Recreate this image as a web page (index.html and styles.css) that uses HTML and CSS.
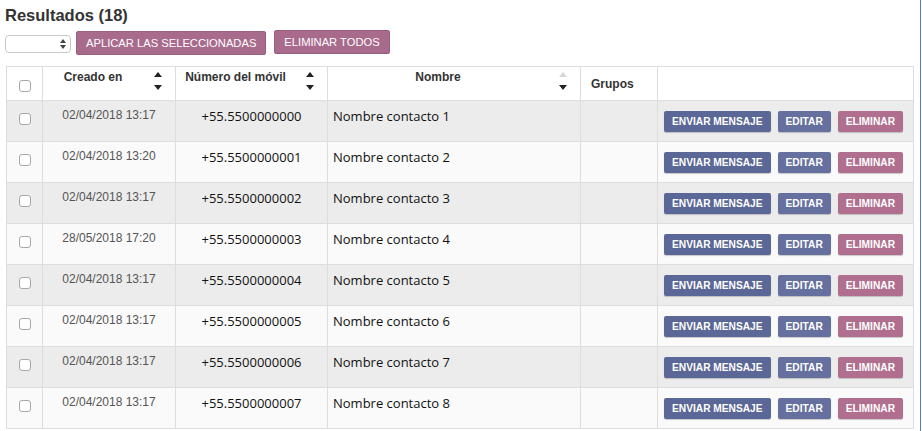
FILE: index.html
```html
<!DOCTYPE html>
<html lang="es">
<head>
  <meta charset="UTF-8" />
  <title>Resultados</title>
  <link rel="stylesheet" href="styles.css">
</head>
<body>
  <div class="page">
    <h2 class="title">Resultados (18)</h2>

    <div class="toolbar">
      <div class="select-box">
        <svg class="select-arrows" width="6" height="10" viewBox="0 0 6 10"><path d="M3 0L6 4H0Z M3 10L0 6H6Z" fill="#444"/></svg>
      </div>
      <button class="btn-top">Aplicar las seleccionadas</button>
      <button class="btn-top">Eliminar todos</button>
    </div>

    <table class="results">
      <thead>
        <tr>
          <th class="col-check"><span class="checkbox"></span></th>
          <th class="col-date">
            <div class="sortable">
              <span class="label">Creado en</span>
              <span class="sort"><i class="up"></i><i class="down"></i></span>
            </div>
          </th>
          <th class="col-phone">
            <div class="sortable">
              <span class="label">Número del móvil</span>
              <span class="sort"><i class="up"></i><i class="down"></i></span>
            </div>
          </th>
          <th class="col-name">
            <div class="sortable">
              <span class="label">Nombre</span>
              <span class="sort"><i class="up off"></i><i class="down"></i></span>
            </div>
          </th>
          <th class="col-groups"><span class="plain">Grupos</span></th>
          <th class="col-actions"></th>
        </tr>
      </thead>
      <tbody id="rows"></tbody>
    </table>
  </div>

  <script>
    const contacts = [
      ["02/04/2018 13:17", "+55.5500000000", "Nombre contacto 1"],
      ["02/04/2018 13:20", "+55.5500000001", "Nombre contacto 2"],
      ["02/04/2018 13:17", "+55.5500000002", "Nombre contacto 3"],
      ["28/05/2018 17:20", "+55.5500000003", "Nombre contacto 4"],
      ["02/04/2018 13:17", "+55.5500000004", "Nombre contacto 5"],
      ["02/04/2018 13:17", "+55.5500000005", "Nombre contacto 6"],
      ["02/04/2018 13:17", "+55.5500000006", "Nombre contacto 7"],
      ["02/04/2018 13:17", "+55.5500000007", "Nombre contacto 8"]
    ];

    const tbody = document.getElementById("rows");
    contacts.forEach(c => {
      const tr = document.createElement("tr");
      tr.innerHTML = `
        <td class="col-check"><span class="checkbox"></span></td>
        <td class="date">${c[0]}</td>
        <td class="phone">${c[1]}</td>
        <td class="name">${c[2]}</td>
        <td></td>
        <td class="actions">
          <div class="btn-group">
            <button class="btn btn-send">Enviar mensaje</button>
            <button class="btn btn-edit">Editar</button>
            <button class="btn btn-delete">Eliminar</button>
          </div>
        </td>`;
      tbody.appendChild(tr);
    });
  </script>
</body>
</html>
```

FILE: styles.css
```css
body {
  margin: 0;
  font-family: "Liberation Sans", Arial, sans-serif;
  background: #fff;
  color: #333;
}

.page {
  width: 915px;
  height: 431px;
  padding-left: 5px;
  border-right: 1px solid #4a7cc0;
  overflow: hidden;
}

.title {
  font-size: 16.5px;
  font-weight: bold;
  margin: 0;
  padding-top: 5px;
  line-height: 20px;
  color: #333;
}

.toolbar {
  display: flex;
  align-items: center;
  gap: 5px;
  margin-top: 5px;
  height: 25px;
}

.select-box {
  width: 64px;
  height: 16px;
  border: 1px solid #c8c8c8;
  border-radius: 4px;
  position: relative;
  margin-top: 3px;
}

.select-arrows {
  position: absolute;
  right: 4px;
  top: 3px;
}

.btn-top {
  font-family: "Liberation Sans", Arial, sans-serif;
  font-size: 11.2px;
  text-transform: uppercase;
  color: #fff;
  background: #a96b8c;
  border: 1px solid #9a5f7e;
  border-radius: 2px;
  height: 24px;
  padding: 0 9px;
  cursor: pointer;
}

.btn-top + .btn-top {
  margin-left: 3px;
  margin-top: -2px;
}

.results {
  margin-top: 11px;
  margin-left: 1px;
  width: 908px;
  border-collapse: collapse;
  border: 1px solid #ddd;
  table-layout: fixed;
}

.results th,
.results td {
  border: 1px solid #ddd;
  padding: 0;
}

.results thead tr {
  height: 34px;
}

.results th {
  font-size: 12px;
  font-weight: bold;
  color: #333;
  background: #fff;
  vertical-align: top;
}

.col-check { width: 35px; }
.col-date { width: 132px; }
.col-phone { width: 151px; }
.col-name { width: 252px; }
.col-groups { width: 76px; }

.results th.col-groups {
  text-align: left;
}

.plain {
  display: block;
  margin: 10px 0 0 10px;
  line-height: 14px;
}

.results th.col-check {
  vertical-align: top;
}

.results th.col-check .checkbox {
  margin-top: 13px;
}

.sortable {
  display: flex;
  padding-top: 3px;
}

.sortable .label {
  flex: 1;
  text-align: center;
  line-height: 14px;
}

.sort {
  width: 30px;
  display: flex;
  flex-direction: column;
  align-items: center;
  gap: 8px;
  padding-top: 2px;
  margin-right: 2px;
}

.sort i {
  display: block;
  width: 0;
  height: 0;
  border-left: 4px solid transparent;
  border-right: 4px solid transparent;
}

.sort .up { border-bottom: 5px solid #222; }
.sort .up.off { border-bottom-color: #d8d8d8; }
.sort .down { border-top: 5px solid #222; }

.checkbox {
  display: block;
  width: 10px;
  height: 10px;
  margin: 0 auto;
  border: 1px solid #a8a8a8;
  border-radius: 3px;
  background: #fff;
}

.results tbody tr {
  height: 41px;
}

.results tbody tr:nth-child(odd) { background: #ececec; }
.results tbody tr:nth-child(even) { background: #fafafa; }

.results td {
  vertical-align: top;
  padding-top: 8px;
  line-height: 14px;
}

.results td.col-check {
  padding-top: 12px;
}

.results td.date {
  text-align: center;
  font-size: 12px;
  color: #555;
  padding-top: 7px;
}

.phone {
  text-align: center;
  font-family: "Open Sans", sans-serif;
  font-size: 13px;
  color: #111;
  padding-right: 4px;
}

.name {
  font-family: "Open Sans", sans-serif;
  font-size: 13px;
  color: #111;
  padding-left: 5px !important;
}

.results td.actions {
  padding-top: 10px;
  padding-left: 6px;
}

.btn-group {
  display: flex;
  gap: 7px;
}

.btn {
  font-family: "Liberation Sans", Arial, sans-serif;
  font-size: 10.2px;
  font-weight: bold;
  text-transform: uppercase;
  color: #fff;
  border: none;
  border-radius: 2px;
  height: 21px;
  padding: 0 8px;
  box-shadow: 0 1px 1px rgba(0, 0, 0, 0.2);
  cursor: pointer;
}

.btn-send { background: #5b6796; }
.btn-edit { background: #65709f; }
.btn-delete { background: #b06f8f; }
```
